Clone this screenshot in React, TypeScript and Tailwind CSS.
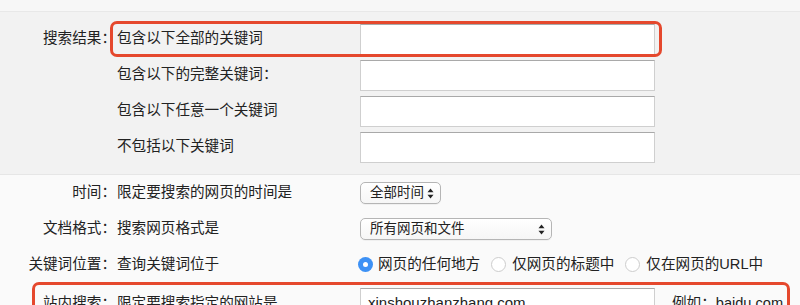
import type { ReactNode } from "react";

const FONT = "font-['Liberation_Sans','Noto_Sans_CJK_SC',sans-serif]";

function Arrows() {
  return (
    <svg width="7" height="11" viewBox="0 0 7 11" className="shrink-0">
      <path d="M3.5 0.5 L6.5 4.3 L0.5 4.3 Z" fill="#222" />
      <path d="M3.5 10.5 L6.5 6.7 L0.5 6.7 Z" fill="#222" />
    </svg>
  );
}

function Select({ label, width }: { label: string; width: string }) {
  return (
    <div
      className={`${width} h-[22px] flex items-center justify-between pl-[9px] pr-[6px] rounded-[5px] border border-[#b5b5b5] bg-gradient-to-b from-white to-[#f6f6f6] shadow-[0_1px_0_rgba(0,0,0,0.04)] text-[13.5px] text-[#222] whitespace-nowrap`}
    >
      <span>{label}</span>
      <Arrows />
    </div>
  );
}

function TextBox({ value }: { value?: string }) {
  return (
    <div className="w-[295px] h-[31px] bg-white border border-[#cfcfcf] border-t-[#a9a9a9] flex items-center px-[7px] text-[15px] text-[#222]">
      {value}
    </div>
  );
}

function Radio({ checked, label }: { checked?: boolean; label: string }) {
  return (
    <div className="flex items-center mr-[11px]">
      {checked ? (
        <span className="w-[15px] h-[15px] rounded-full bg-[#3d91f5] flex items-center justify-center mr-[5px]">
          <span className="w-[5px] h-[5px] rounded-full bg-white" />
        </span>
      ) : (
        <span className="w-[15px] h-[15px] rounded-full bg-white border border-[#cdcdcd] mr-[6px]" />
      )}
      <span>{label}</span>
    </div>
  );
}

function Row({
  label,
  desc,
  children,
  height = "h-[36px]",
  note,
}: {
  label?: string;
  desc: string;
  children: ReactNode;
  height?: string;
  note?: ReactNode;
}) {
  return (
    <div className={`relative flex items-center ${height}`}>
      <div className="w-[116px] shrink-0 text-right whitespace-nowrap">{label}</div>
      <div className="w-[244px] shrink-0 pl-[1px]">{desc}</div>
      <div className="flex items-center">{children}</div>
      {note}
    </div>
  );
}

export default function App() {
  return (
    <div className={`${FONT} w-[800px] h-[305px] overflow-hidden bg-[#fafafa] text-[14.6px] text-[#222]`}>
      <div className="h-[12px] bg-[#f7f7f7] border-b border-[#e8e8e8]" />

      {/* 搜索结果 */}
      <section className="bg-[#f2f2f2] border-b border-[#e6e6e6] py-[9px]">
        <Row
          label="搜索结果："
          desc="包含以下全部的关键词"
          note={
            <div className="absolute left-[110px] right-[138px] top-0 bottom-0 border-[3px] border-[#e5482d] rounded-[7px] pointer-events-none" />
          }
        >
          <TextBox />
        </Row>
        <Row desc="包含以下的完整关键词：">
          <TextBox />
        </Row>
        <Row desc="包含以下任意一个关键词">
          <TextBox />
        </Row>
        <Row desc="不包括以下关键词">
          <TextBox />
        </Row>
      </section>

      {/* 其他条件 */}
      <section>
        <Row label="时间：" desc="限定要搜索的网页的时间是">
          <Select label="全部时间" width="w-[81px]" />
        </Row>
        <Row label="文档格式：" desc="搜索网页格式是">
          <Select label="所有网页和文件" width="w-[192px]" />
        </Row>
        <Row label="关键词位置：" desc="查询关键词位于">
          <div className="flex items-center -ml-[2px]">
            <Radio checked label="网页的任何地方" />
            <Radio label="仅网页的标题中" />
            <Radio label="仅在网页的URL中" />
          </div>
        </Row>
        <Row
          label="站内搜索："
          desc="限定要搜索指定的网站是"
          height="h-[41px]"
          note={
            <div className="absolute left-[32px] right-[10px] top-[-1px] h-[60px] border-[3px] border-[#e5482d] rounded-[7px] pointer-events-none" />
          }
        >
          <TextBox value="xinshouzhanzhang.com" />
          <span className="ml-[17px] whitespace-nowrap">例如：baidu.com</span>
        </Row>
      </section>
    </div>
  );
}
